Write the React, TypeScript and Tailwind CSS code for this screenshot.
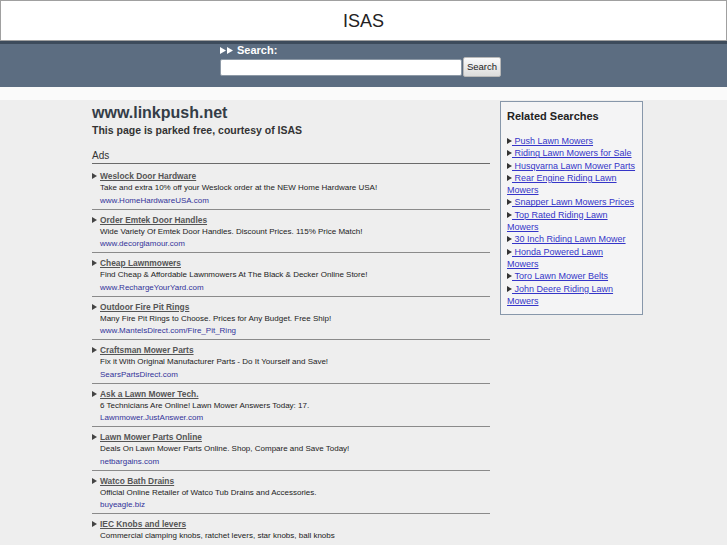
import React from "react";

const ads = [
  {
    title: "Weslock Door Hardware",
    desc: "Take and extra 10% off your Weslock order at the NEW Home Hardware USA!",
    url: "www.HomeHardwareUSA.com",
  },
  {
    title: "Order Emtek Door Handles",
    desc: "Wide Variety Of Emtek Door Handles. Discount Prices. 115% Price Match!",
    url: "www.decorglamour.com",
  },
  {
    title: "Cheap Lawnmowers",
    desc: "Find Cheap & Affordable Lawnmowers At The Black & Decker Online Store!",
    url: "www.RechargeYourYard.com",
  },
  {
    title: "Outdoor Fire Pit Rings",
    desc: "Many Fire Pit Rings to Choose. Prices for Any Budget. Free Ship!",
    url: "www.MantelsDirect.com/Fire_Pit_Ring",
  },
  {
    title: "Craftsman Mower Parts",
    desc: "Fix it With Original Manufacturer Parts - Do It Yourself and Save!",
    url: "SearsPartsDirect.com",
  },
  {
    title: "Ask a Lawn Mower Tech.",
    desc: "6 Technicians Are Online! Lawn Mower Answers Today: 17.",
    url: "Lawnmower.JustAnswer.com",
  },
  {
    title: "Lawn Mower Parts Online",
    desc: "Deals On Lawn Mower Parts Online. Shop, Compare and Save Today!",
    url: "netbargains.com",
  },
  {
    title: "Watco Bath Drains",
    desc: "Official Online Retailer of Watco Tub Drains and Accessories.",
    url: "buyeagle.biz",
  },
  {
    title: "IEC Knobs and levers",
    desc: "Commercial clamping knobs, ratchet levers, star knobs, ball knobs",
    url: "www.monroepmp.com",
  },
];

const related = [
  "Push Lawn Mowers",
  "Riding Lawn Mowers for Sale",
  "Husqvarna Lawn Mower Parts",
  "Rear Engine Riding Lawn Mowers",
  "Snapper Lawn Mowers Prices",
  "Top Rated Riding Lawn Mowers",
  "30 Inch Riding Lawn Mower",
  "Honda Powered Lawn Mowers",
  "Toro Lawn Mower Belts",
  "John Deere Riding Lawn Mowers",
];

// small play-style arrow used before links
const Arrow = ({ color = "#3a3a3a", size = 6 }: { color?: string; size?: number }) => (
  <svg width={size} height={size + 1} viewBox="0 0 6 7" className="inline-block align-baseline">
    <polygon points="0,0 6,3.5 0,7" fill={color} />
  </svg>
);

export default function App() {
  return (
    <div className="min-h-[545px] bg-[#eeeeee] font-['Liberation_Sans',Arial,sans-serif]">
      {/* header */}
      <header className="h-[41px] bg-white border border-[#a0a0a0] flex items-center justify-center">
        <span className="text-[18px] text-[#222] leading-none">ISAS</span>
      </header>

      {/* search bar */}
      <div className="border-t-[3px] border-[#3d4b5b] bg-[#5c6d81] h-[46px] pl-[220px]">
        <div className="flex items-center gap-[4px] text-white text-[11px] font-bold leading-[13px]">
          <span className="flex items-center gap-[1px]">
            <Arrow color="#ffffff" size={6} />
            <Arrow color="#ffffff" size={6} />
          </span>
          <span>Search:</span>
        </div>
        <div className="flex items-center gap-[1px]">
          <input
            type="text"
            className="w-[242px] h-[17px] bg-white border border-[#8d99a6] rounded-[2px]"
          />
          <button className="w-[38px] h-[20px] rounded-[2px] border border-[#b8b8b8] bg-gradient-to-b from-[#fbfbfb] to-[#dcdcdc] text-[9.5px] text-[#222] leading-none">
            Search
          </button>
        </div>
      </div>
      <div className="h-[13px] bg-[#fafafa]" />

      {/* content */}
      <div className="flex items-start gap-[10px] pl-[92px]">
        <main className="w-[398px] pt-[3px]">
          <h1 className="text-[16px] font-bold leading-[20px] text-[#343d47]">www.linkpush.net</h1>
          <p className="text-[10.5px] font-bold leading-[14px] text-[#333]">
            This page is parked free, courtesy of ISAS
          </p>
          <div className="mt-[12px] text-[10px] leading-[13px] text-[#333] border-b border-[#6a6a6a] pb-[1px]">
            Ads
          </div>
          <ul className="mt-[2px]">
            {ads.map((ad) => (
              <li key={ad.title} className="border-b border-[#8a8a8a] pt-[4px] pb-[2px]">
                <div className="flex items-center gap-[3px] leading-[12px]">
                  <Arrow color="#444" size={5} />
                  <a href="#" className="text-[8.4px] font-bold text-[#555] underline">
                    {ad.title}
                  </a>
                </div>
                <div className="pl-[8px] text-[8px] leading-[12.5px] text-[#222]">{ad.desc}</div>
                <div className="pl-[8px] text-[8px] leading-[12px] text-[#33339a]">{ad.url}</div>
              </li>
            ))}
          </ul>
        </main>

        <aside className="w-[143px] mt-[1px] border border-[#8797aa] bg-[#f4f4f5] px-[6px] pt-[7px] pb-[7px]">
          <h2 className="text-[11px] font-bold leading-[14px] text-[#222]">Related Searches</h2>
          <ul className="mt-[12px]">
            {related.map((r) => (
              <li key={r} className="text-[9px] leading-[12.3px]">
                <Arrow color="#333" size={5} />
                <a href="#" className="text-[#3535c8] underline">
                  {"\u00a0" + r}
                </a>
              </li>
            ))}
          </ul>
        </aside>
      </div>
    </div>
  );
}
